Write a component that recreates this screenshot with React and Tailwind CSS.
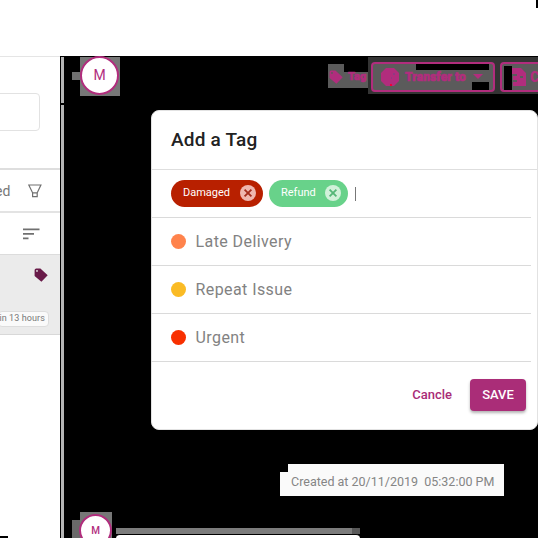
import React from "react";

function Close({ color, cross }) {
  return (
    <svg width="16" height="16" viewBox="0 0 16 16" className="-mt-px shrink-0">
      <circle cx="8" cy="8" r="8" fill={color} />
      <path d="M4.6 4.6l6.8 6.8M11.4 4.6l-6.8 6.8" stroke={cross} strokeWidth="1.8" />
    </svg>
  );
}

function TagIcon({ className }) {
  return (
    <svg viewBox="0 0 14 14" className={className} fill="currentColor">
      <path
        fillRule="evenodd"
        d="M2.2 .5H6.4L13.7 7.2 7.4 13.7 .6 7.9V2.1Q.7 .6 2.2 .5ZM3 2a.9 .9 0 1 0 0 1.8a.9 .9 0 0 0 0-1.8Z"
      />
    </svg>
  );
}

function Row({ dot, label }) {
  return (
    <div className="mr-[6px] flex h-12 items-center border-b border-[#dadada] pl-5">
      <span className={"mr-[9.5px] size-[15px] rounded-full " + dot} />
      <span className="text-[16px] leading-5 tracking-[0.42px] text-[#828282]">{label}</span>
    </div>
  );
}

function Sidebar() {
  return (
    <aside className="flex w-[60px] shrink-0 flex-col overflow-hidden border-t border-[#e5e5e5] bg-white text-[#777]">
      <div className="h-[113px] shrink-0 border-b-2 border-[#dedede] pt-9">
        <div className="-ml-2 h-[38px] w-12 rounded border border-[#e2e2e2]" />
      </div>
      <div className="flex h-[43px] shrink-0 items-center justify-between border-b-2 border-[#e3e3e3] pr-[18px]">
        <span className="-ml-[5px] mt-px text-[14px]">ed</span>
        <svg width="14" height="14" viewBox="0 0 14 14" fill="none" stroke="#707070" strokeWidth="1.2">
          <path d="M.8 1h12.1L9.2 8.8v3.9H4.6V8.8ZM4.6 8.8h4.6" />
        </svg>
      </div>
      <div className="flex h-[42px] shrink-0 justify-end border-b border-[#dcdcdc] pr-[20px] pt-[15px]">
        <svg width="17" height="12" viewBox="0 0 17 12" stroke="#707070" strokeWidth="1.8">
          <path d="M0 1.4h16.5M0 5.8h11M0 10.4h5.5" />
        </svg>
      </div>
      <div className="flex h-[80px] shrink-0 flex-col items-end border-b border-[#d8d8d8] bg-[#ebebeb] pr-[11px] pt-[13px]">
        <TagIcon className="mr-px size-[14px] text-[#691b49]" />
        <span className="mt-[29px] flex h-[16px] items-center whitespace-nowrap rounded border border-[#ddd] bg-[#fafafa] pr-[3px] text-[9px] tracking-[0.1px]">
          in 13 hours
        </span>
      </div>
    </aside>
  );
}

function Toolbar() {
  return (
    <div className="relative flex h-[54px] shrink-0 items-start text-[#b12d7d]">
      <span className="absolute left-[8px] top-[16px] h-[8px] w-[8px] bg-[#707070]" />
      <span className="absolute left-[16px] top-px h-[39px] w-[40px] bg-[#777]" />
      <span className="relative ml-[16px] flex size-[39px] items-center justify-center rounded-full border-2 border-[#b12d7d] bg-white text-[14px]">
        M
      </span>
      <span className="absolute left-[264px] top-[8px] h-[24px] w-[16px] bg-[#5b5b5b]" />
      <span className="absolute left-[280px] top-[16px] h-[16px] w-[24px] bg-[#5b5b5b]" />
      <span className="absolute left-[304px] top-px h-[37px] w-[170px] bg-[#343434]" />
      <TagIcon className="relative ml-[210px] mt-[14px] size-[14px]" />
      <span className="relative ml-[5px] mt-[13px] w-[23px] text-[11px] font-black leading-4 [-webkit-text-stroke:0.6px_#b12d7d]">Tag</span>
      <div className="relative mt-[6px] flex h-[30px] w-[124px] shrink-0 items-center rounded border-2 border-[#b12d7d] bg-[#5b5b5b]">
        <span className="absolute left-[43px] top-0 h-[6px] w-[73px] bg-black" />
        <span className="absolute bottom-0 left-[99px] h-[8px] w-[17px] bg-black" />
        <svg width="20" height="20" viewBox="0 0 20 20" className="relative ml-[7px]">
          <path d="M6 1h8l5 5v8l-5 5H6l-5-5V6Z" fill="currentColor" />
          <path d="M13 7h2M11 11h1" stroke="#6c4a88" />
          <path d="M10 18h2" stroke="#f00038" strokeWidth="2" />
        </svg>
        <span className="relative ml-[5px] whitespace-nowrap text-[12px] font-black tracking-[0.1px] [-webkit-text-stroke:0.6px_#b12d7d]">
          Transfer to
        </span>
        <svg width="10" height="6" viewBox="0 0 10 6" className="relative ml-[7px] shrink-0">
          <path d="M0 0h10L5 5Z" fill="currentColor" />
        </svg>
      </div>
      <div className="relative ml-[5px] mt-[6px] flex h-[30px] w-[38px] shrink-0 items-center rounded-l border-2 border-r-0 border-[#b12d7d] bg-[#5b5b5b]">
        <span className="absolute left-[2px] top-[2px] h-[24px] w-[8px] bg-black" />
        <svg width="14" height="18" viewBox="0 0 14 18" className="relative ml-[10px] shrink-0">
          <path
            fillRule="evenodd"
            d="M0 0h9l5 5v13H1v-4h4v-2H1V8h4V6H0ZM8 8v2h3V8Z"
            fill="currentColor"
          />
        </svg>
        <span className="ml-[4px] text-[14px] font-black">C</span>
      </div>
    </div>
  );
}

function TagDialog() {
  return (
    <section className="ml-[87px] flex h-[320px] w-[387px] shrink-0 flex-col rounded-lg border border-[#e2e2e2] bg-white">
      <h1 className="flex h-[59px] shrink-0 items-center border-b border-[#dedede] pl-[19px] text-[19px] font-medium tracking-[0.2px] text-[#222]">
        Add a Tag
      </h1>
      <div className="mr-[6px] flex h-12 shrink-0 items-center border-b border-[#dadada] pl-[19px] text-[11px] text-white">
        <span className="flex h-[27px] w-[92px] items-center justify-between rounded-full bg-[#b82000] pl-[12px] pr-[7px]">
          Damaged <Close color="#efb7af" cross="#a42c1c" />
        </span>
        <span className="ml-[6px] flex h-[27px] w-[79px] items-center justify-between rounded-full bg-[#68d28a] pl-[12px] pr-[7px]">
          Refund <Close color="#d1f1da" cross="#55b678" />
        </span>
        <span className="ml-[7px] h-[14px] w-px bg-[#777]" />
      </div>
      <div className="-ml-px">
        <Row dot="bg-[#ff834c]" label="Late Delivery" />
        <Row dot="bg-[#fabb25]" label="Repeat Issue" />
        <Row dot="bg-[#f83000]" label="Urgent" />
      </div>
      <div className="flex items-center justify-end pr-[11px] pt-[17px] text-[13px] font-medium">
        <button className="mr-[18px] text-[#a92b77]">Cancle</button>
        <button className="h-8 w-14 rounded bg-[#aa2d78] text-white shadow-[0_2px_3px_rgba(0,0,0,0.3)]">SAVE</button>
      </div>
    </section>
  );
}

export default function App() {
  return (
    <div className="flex h-[538px] w-[538px] flex-col overflow-hidden bg-white font-[Roboto,sans-serif]">
      <header className="flex h-14 shrink-0 justify-end bg-white">
        <span className="h-[8px] w-[2px] bg-black" />
      </header>
      <div className="relative flex min-h-0 flex-1">
        <Sidebar />
        <div className="w-1 shrink-0 border-l border-t border-black bg-[#b5b5b5]">
          <div className="mt-[46px] h-[2px] bg-black" />
        </div>
        <span className="absolute bottom-0 left-0 h-[2px] w-[8px] bg-black" />
        <main className="flex min-w-0 flex-1 flex-col overflow-hidden bg-black">
          <Toolbar />
          <TagDialog />
          <div className="relative ml-[216px] mt-[34px] flex h-8 w-[224px] shrink-0 items-center whitespace-pre bg-[#fafafa] pl-[11px] pt-[4px] text-[12.5px] text-[#858585]">
            <span className="absolute left-0 top-0 size-[8px] bg-black" />
            {"Created at 20/11/2019  05:32:00 PM"}
          </div>
          <div className="relative mt-[18px] flex shrink-0 items-start">
            <span className="absolute left-[8px] top-[6px] h-[20px] w-[8px] bg-[#696969]" />
            <span className="absolute left-[16px] top-[-2px] h-[30px] w-[32px] bg-[#777]" />
            <span className="relative ml-[15px] flex size-[33px] shrink-0 items-center justify-center rounded-full border-2 border-[#b12d7d] bg-white text-[10px] font-medium text-[#b12d7d]">
              M
            </span>
            <div className="relative ml-[4px] mt-[14px] h-[10px] w-[244px] bg-[#7c7c7c] pt-[6px]">
              <span className="absolute right-0 top-0 h-[10px] w-[8px] bg-[#585858]" />
              <span className="absolute bottom-0 left-0 h-[4px] w-full bg-black" />
              <div className="relative h-[4px] rounded-t border-t border-black bg-white" />
            </div>
          </div>
        </main>
      </div>
    </div>
  );
}
